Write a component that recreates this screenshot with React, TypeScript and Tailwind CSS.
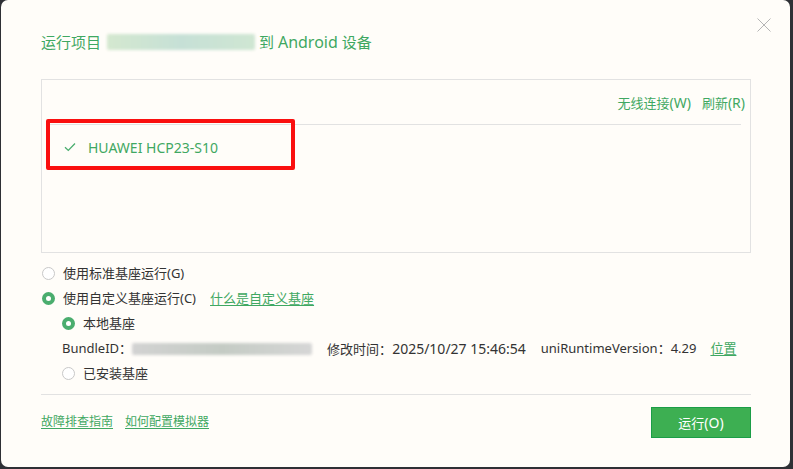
import React from 'react';

const green = 'text-[#3fa862]';

const Radio = ({ checked }: { checked?: boolean }) =>
  checked ? (
    <span className="flex h-[13px] w-[13px] shrink-0 items-center justify-center rounded-full bg-[#4aad6e]">
      <span className="h-[5px] w-[5px] rounded-full bg-white" />
    </span>
  ) : (
    <span className="h-[13px] w-[13px] shrink-0 rounded-full border border-[#c8c8c8] bg-white" />
  );

const Blur = ({ className }: { className: string }) => (
  <span className={`inline-block shrink-0 rounded-[2px] blur-[1.5px] ${className}`} />
);

export default function App() {
  return (
    <div
      className="h-[469px] w-[793px] bg-[#2e3035] text-[13px] text-[#333]"
      style={{ fontFamily: '"Noto Sans", "Noto Sans CJK SC", sans-serif' }}
    >
      <div className="relative ml-px flex h-[467px] w-[789px] flex-col rounded-[7px] bg-[#fffdf9] pl-[40px] pr-[39px]">
        {/* header */}
        <div className="flex h-[79px] items-center pt-[5px]">
          <span className={`text-[15px] ${green}`}>运行项目</span>
          <Blur className="ml-[6px] mr-[4px] h-[16px] w-[148px] bg-gradient-to-r from-[#d4e8cf] via-[#c6e0d6] to-[#cfe6d2]" />
          <span className={`text-[15px] ${green}`}>
            到 <span className="text-[16px]">Android</span> 设备
          </span>
        </div>
        <svg
          className="absolute right-[19px] top-[18px]"
          width="14"
          height="14"
          viewBox="0 0 14 14"
          stroke="#b5b5b5"
          strokeWidth="1"
        >
          <path d="M0.5 0.5L13.5 13.5M13.5 0.5L0.5 13.5" />
        </svg>

        {/* device box */}
        <div className="relative h-[174px] border border-[#e2e2e2] px-[4px]">
          <div className={`flex h-[44px] items-center justify-end gap-[11px] pr-[1px] pt-[2px] ${green}`}>
            <span>
              无线连接<span className="text-[14px]">(W)</span>
            </span>
            <span>
              刷新<span className="text-[14px]">(R)</span>
            </span>
          </div>
          <div className="mr-[5px] border-t border-[#e2e2e2]" />
          <div className="flex h-[44px] items-center pl-[18px]">
            <svg width="12" height="10" viewBox="0 0 12 10" fill="none" stroke="#4aad6e" strokeWidth="1.3">
              <path d="M1 5.2L4.3 8.4L11 1.5" />
            </svg>
            <span className={`ml-[12px] text-[14px] ${green}`}>HUAWEI HCP23-S10</span>
          </div>
          <div className="absolute left-[4px] top-[39px] h-[51px] w-[249px] rounded-[2px] border-[4px] border-[#fa0f0f]" />
        </div>

        {/* options */}
        <div className="flex flex-col whitespace-nowrap pt-[8px]">
          <div className="flex h-[25px] items-center gap-[8px] pl-[1px]">
            <Radio />
            <span>使用标准基座运行(G)</span>
          </div>
          <div className="flex h-[25px] items-center gap-[8px] pl-[1px]">
            <Radio checked />
            <span>使用自定义基座运行(C)</span>
            <span className={`ml-[6px] underline underline-offset-2 ${green}`}>什么是自定义基座</span>
          </div>
          <div className="flex h-[25px] items-center gap-[8px] pl-[21px]">
            <Radio checked />
            <span>本地基座</span>
          </div>
          <div className="flex h-[25px] items-center pl-[21px]">
            <span>BundleID：</span>
            <Blur className="h-[12px] w-[180px] bg-gradient-to-r from-[#d2d2d2] via-[#c4cbc4] to-[#d6d6d6]" />
            <span className="ml-[15px] shrink-0">
              修改时间：<span className="text-[14px]">2025/10/27 15:46:54</span>
            </span>
            <span className="ml-[15px] shrink-0">uniRuntimeVersion：4.29</span>
            <span className={`ml-[14px] shrink-0 underline underline-offset-2 ${green}`}>位置</span>
          </div>
          <div className="flex h-[25px] items-center gap-[8px] pl-[21px]">
            <Radio />
            <span>已安装基座</span>
          </div>
        </div>

        <div className="mt-[8px] border-t border-[#e2e2e2]" />

        {/* footer */}
        <div className="flex flex-1 items-start justify-between pt-[12px]">
          <div className={`flex h-[30px] items-center gap-[12px] text-[12px] ${green}`}>
            <span className="underline underline-offset-2">故障排查指南</span>
            <span className="underline underline-offset-2">如何配置模拟器</span>
          </div>
          <button className="h-[31px] w-[100px] border border-[#1b9d47] bg-[#3daf52] text-white">
            运行<span className="text-[14px]">(O)</span>
          </button>
        </div>
      </div>
    </div>
  );
}
